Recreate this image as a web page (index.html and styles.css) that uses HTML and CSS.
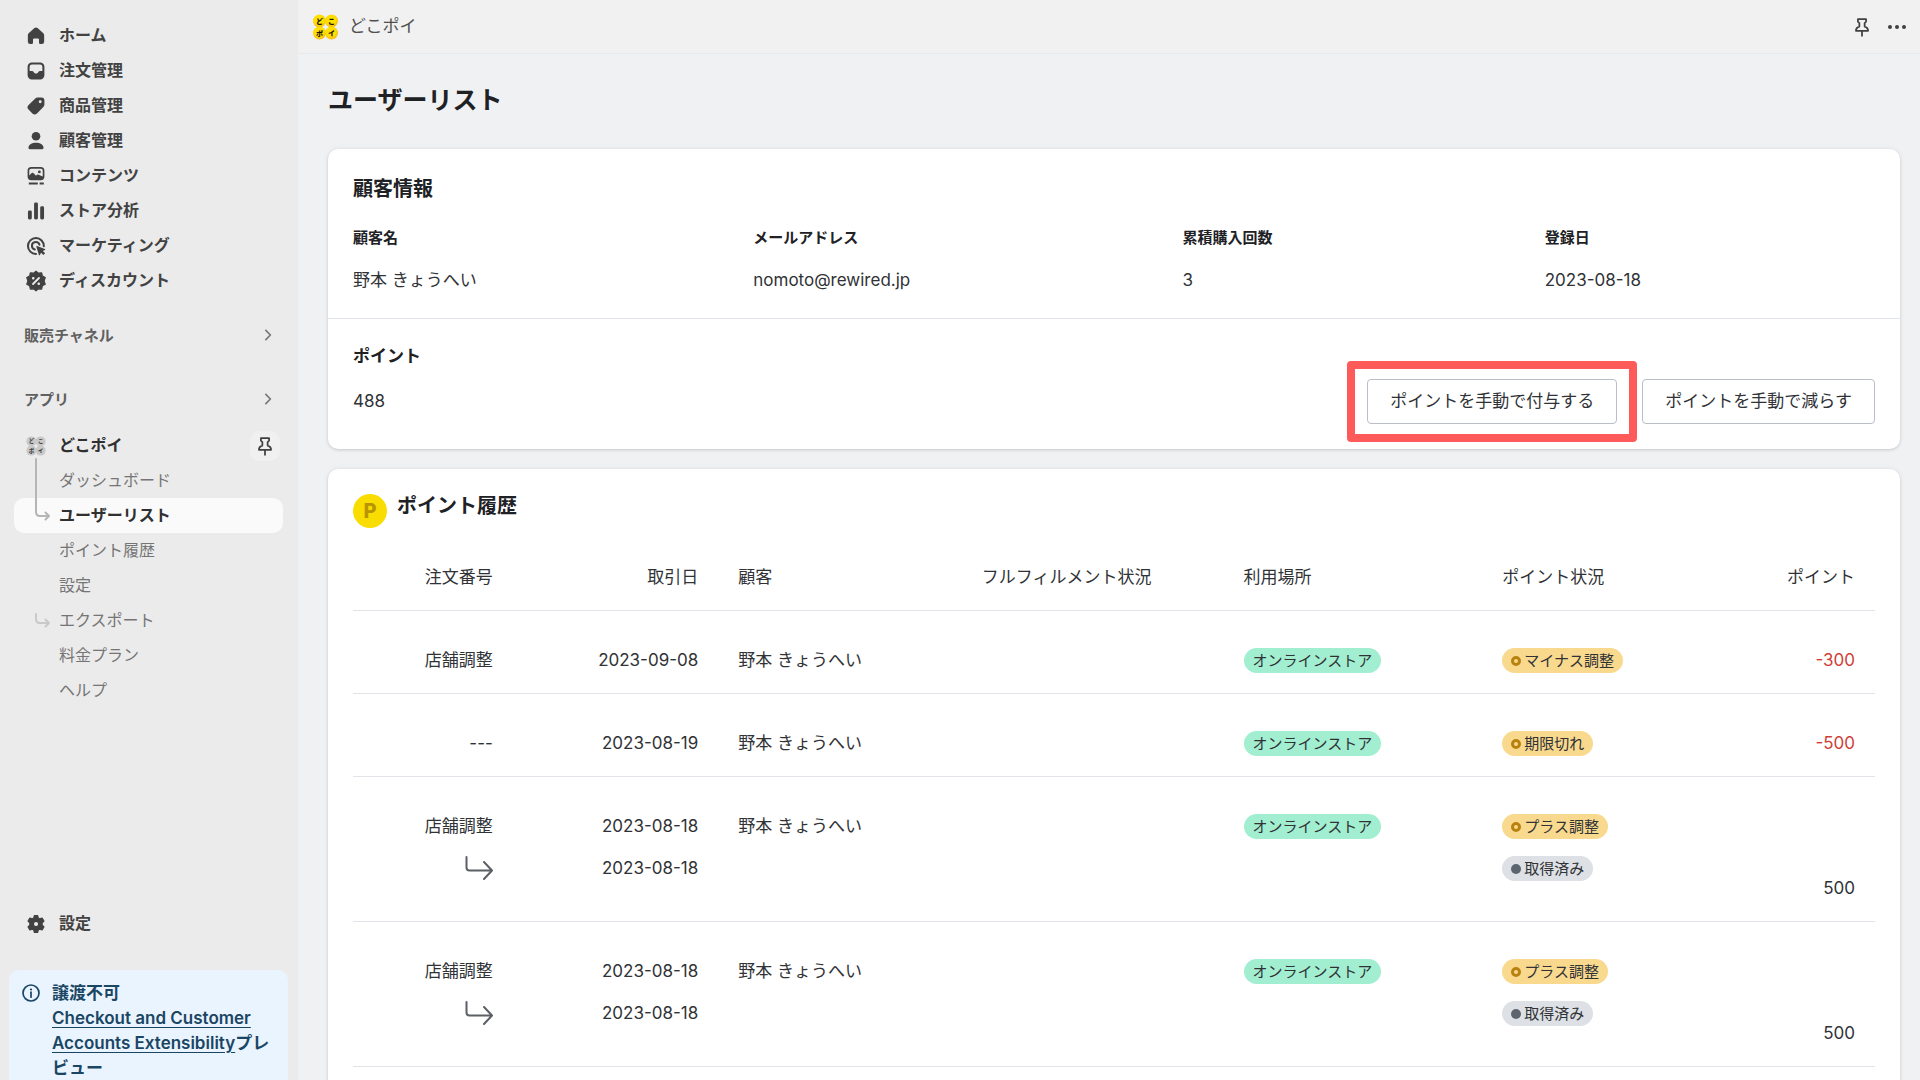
FILE: index.html
```html
<!DOCTYPE html>
<html lang="ja">
<head>
<meta charset="utf-8">
<meta name="viewport" content="width=device-width, initial-scale=1">
<title>どこポイ - ユーザーリスト</title>
<link rel="stylesheet" href="styles.css">
</head>
<body>
<svg class="defs" width="0" height="0" aria-hidden="true">
  <defs>
    <radialGradient id="coin-shade" cx=".45" cy=".4" r=".6">
      <stop offset=".6" stop-color="#ffe000"/><stop offset="1" stop-color="#f8b912"/>
    </radialGradient>
    <symbol id="i-pin" viewBox="0 0 20 20">
      <path d="M6.3 2.8h7.4v2.4l-1.3 1.2v3.2c2 .5 3.1 1.700 3.100 3.900h-11c0-2.200 1.100-3.400 3.100-3.900v-3.200l-1.300-1.200zM10 13.500v4.500" fill="none" stroke="currentColor" stroke-width="1.600" stroke-linejoin="round" stroke-linecap="round"/>
    </symbol>
    <symbol id="i-chevron" viewBox="0 0 20 20">
      <path d="M8.200 6.200l3.800 3.800-3.800 3.800" fill="none" stroke="currentColor" stroke-width="1.400" stroke-linecap="round" stroke-linejoin="round"/>
    </symbol>
    <symbol id="i-return" viewBox="0 0 28 24">
      <path d="M1.500 1v10.500q0 3 3 3h22M19 6l8 8.500-8 8.500" fill="none" stroke="currentColor" stroke-width="2" stroke-linecap="round" stroke-linejoin="round"/>
    </symbol>
    <symbol id="i-logo" viewBox="0 0 26 26">
      <g fill="var(--coin)">
        <circle cx="7" cy="7" r="6.500"/><circle cx="19" cy="7" r="6.500"/>
        <circle cx="7" cy="19" r="6.500"/><circle cx="19" cy="19" r="6.500"/>
      </g>
      <g class="logo-text" fill="var(--ink)">
        <text x="7" y="9.500">ど</text><text x="19" y="9.500">こ</text>
        <text x="7" y="21.500">ポ</text><text x="19" y="21.500">イ</text>
      </g>
    </symbol>
  </defs>
</svg>
<div class="app">
  <aside class="sidebar">
    <nav class="nav" aria-label="メイン">
      <a class="nav-item" href="#"><svg class="icon" viewBox="0 0 20 20"><path d="M8.700 3.400a2 2 0 0 1 2.600 0l4.600 4q.9.800.9 2v5.300a2 2 0 0 1-2 2h-1.300a1 1 0 0 1-1-1v-2.700a1 1 0 0 0-1-1h-3a1 1 0 0 0-1 1v2.700a1 1 0 0 1-1 1H5.200a2 2 0 0 1-2-2V9.400q0-1.200.9-2z"/></svg>ホーム</a>
      <a class="nav-item" href="#"><svg class="icon" viewBox="0 0 20 20"><path fill-rule="evenodd" d="M6.500 3h7A3.500 3.500 0 0 1 17 6.500v7a3.500 3.500 0 0 1-3.500 3.500h-7A3.500 3.500 0 0 1 3 13.500v-7A3.500 3.500 0 0 1 6.500 3zm.2 1.500a2 2 0 0 0-2 2V10h2.100q.7 0 1.100.6l.6.900q.4.500 1 .5h1q.6 0 1-.5l.6-.9q.4-.6 1.100-.6h2.100V6.500a2 2 0 0 0-2-2z"/></svg>注文管理</a>
      <a class="nav-item" href="#"><svg class="icon" viewBox="0 0 20 20"><path fill-rule="evenodd" d="M11.300 3h3.200A2.500 2.500 0 0 1 17 5.500v3.200q0 1.200-.9 2.100l-5.300 5.400a2.700 2.700 0 0 1-3.800 0l-3.200-3.200a2.700 2.700 0 0 1 0-3.800l5.400-5.300q.9-.9 2.100-.9zM13.500 7.700a1.200 1.200 0 1 0 0-2.400 1.200 1.200 0 0 0 0 2.400z"/></svg>商品管理</a>
      <a class="nav-item" href="#"><svg class="icon" viewBox="0 0 20 20"><circle cx="10" cy="6" r="3.600"/><path d="M10 11.500c3.500 0 6 1.500 6.300 4q.1 1.300-1 1.300H4.700q-1.100 0-1-1.300c.3-2.500 2.800-4 6.300-4z"/></svg>顧客管理</a>
      <a class="nav-item" href="#"><svg class="icon" viewBox="0 0 20 20"><path fill-rule="evenodd" d="M6 2.500h8a3 3 0 0 1 3 3v5a3 3 0 0 1-3 3H6a3 3 0 0 1-3-3v-5a3 3 0 0 1 3-3zm0 1.400a1.600 1.600 0 0 0-1.600 1.600v4l2-2q.7-.6 1.400 0l2.200 2.200.8-.7q.7-.6 1.400 0l3.400 1.500v-5A1.600 1.600 0 0 0 14 3.900zM12.800 7.800a1.200 1.200 0 1 1 0-2.400 1.200 1.200 0 0 1 0 2.400z"/><path d="M4 15.500h7.500v1.600H4zM13 15.500h3.500v1.600H13z"/></svg>コンテンツ</a>
      <a class="nav-item" href="#"><svg class="icon" viewBox="0 0 20 20"><rect x="3.300" y="9.500" width="3.200" height="7.500" rx="1.200"/><rect x="8.400" y="3" width="3.200" height="14" rx="1.200"/><rect x="13.500" y="6" width="3.200" height="11" rx="1.200"/></svg>ストア分析</a>
      <a class="nav-item" href="#"><svg class="icon" viewBox="0 0 20 20"><g fill="none" stroke="currentColor" stroke-width="1.700" stroke-linecap="round"><path d="M16.500 10.200A6.600 6.600 0 1 0 10 16.600"/><path d="M12.900 9A3.200 3.200 0 1 0 9 12.900"/></g><path d="M10.300 10.700q-.2-.8.6-.6l6.500 2.300q.8.400 0 .9l-1.700.9 1.900 1.900-1.500 1.500-1.900-1.900-.9 1.700q-.5.800-.9 0z"/></svg>マーケティング</a>
      <a class="nav-item" href="#"><svg class="icon" viewBox="0 0 20 20"><path fill-rule="evenodd" d="M10 1.800l2 1.700 2.700-.3.600 2.600 2.400 1.400-1 2.800 1 2.700-2.400 1.300-.6 2.700-2.700-.2-2 1.700-2-1.700-2.700.2-.6-2.700-2.400-1.300 1-2.700-1-2.800 2.400-1.400.6-2.600 2.700.3z" stroke="currentColor" stroke-linejoin="round"/><g class="icon-cut"><path d="M7.500 12.500l5-5" stroke-width="1.500" stroke-linecap="round"/><circle cx="7.700" cy="7.700" r=".6"/><circle cx="12.300" cy="12.300" r=".6"/></g></svg>ディスカウント</a>
    </nav>
    <a class="nav-heading channels" href="#">販売チャネル<svg class="chevron"><use href="#i-chevron"/></svg></a>
    <a class="nav-heading apps" href="#">アプリ<svg class="chevron"><use href="#i-chevron"/></svg></a>
    <nav class="nav" aria-label="アプリ">
      <div class="nav-app">
        <a class="nav-item app-link" href="#"><svg class="icon logo-gray"><use href="#i-logo"/></svg>どこポイ</a>
        <button class="pin-button" type="button" aria-label="固定を解除"><svg class="pin"><use href="#i-pin"/></svg></button>
      </div>
      <div class="subnav">
        <a class="sub-item" href="#">ダッシュボード</a>
        <a class="sub-item active" href="#" aria-current="page">ユーザーリスト</a>
        <a class="sub-item" href="#">ポイント履歴</a>
        <a class="sub-item" href="#">設定</a>
        <a class="sub-item child" href="#"><svg class="branch" viewBox="0 0 16 16"><path d="M1 1v5q0 4 4 4h9M10.500 6.500l3.500 3.500-3.500 3.500"/></svg>エクスポート</a>
        <a class="sub-item" href="#">料金プラン</a>
        <a class="sub-item" href="#">ヘルプ</a>
        <svg class="tree" viewBox="0 0 16 64"><path d="M1 1v53q0 4 4 4h9M10.500 54.500l3.500 3.500-3.500 3.500"/></svg>
      </div>
    </nav>
    <a class="nav-item settings" href="#"><svg class="icon" viewBox="0 0 20 20"><path fill-rule="evenodd" d="M8.600 3h2.800l.5 2.100 1.100.6 2.100-.6 1.500 2.500-1.500 1.600v1.600l1.500 1.600-1.500 2.500-2.100-.6-1.100.6-.5 2.100H8.600l-.5-2.100-1.100-.6-2.100.6-1.500-2.500 1.500-1.600V9.200L3.400 7.600l1.500-2.500 2.100.6 1.100-.6zM10 12.200a2.200 2.200 0 1 0 0-4.400 2.200 2.200 0 0 0 0 4.400z" stroke="currentColor" stroke-linejoin="round"/></svg>設定</a>
    <div class="notice">
      <svg class="notice-icon" viewBox="0 0 18 18"><circle cx="9" cy="9" r="8" fill="none" stroke="currentColor" stroke-width="1.700"/><circle cx="9" cy="5.500" r="1.100"/><path d="M9 8.200v5" stroke="currentColor" stroke-width="1.700" stroke-linecap="round"/></svg>
      <div><strong>譲渡不可</strong><br><a href="#">Checkout and Customer Accounts Extensibility</a>プレビュー</div>
    </div>
  </aside>

  <div class="content">
    <header class="topbar">
      <svg class="logo"><use href="#i-logo"/></svg>
      <span class="app-name">どこポイ</span>
      <button class="top-button" type="button" aria-label="固定"><svg class="pin"><use href="#i-pin"/></svg></button>
      <button class="top-button" type="button" aria-label="その他"><svg class="more" viewBox="0 0 20 20"><circle cx="3" cy="10" r="2"/><circle cx="10" cy="10" r="2"/><circle cx="17" cy="10" r="2"/></svg></button>
    </header>
    <main class="page">
      <h1>ユーザーリスト</h1>
      <section class="card">
        <div class="card-section">
          <h2>顧客情報</h2>
          <table class="info">
            <colgroup><col class="i1"><col class="i2"><col class="i3"><col class="i4"></colgroup>
            <thead><tr><th scope="col">顧客名</th><th scope="col">メールアドレス</th><th scope="col">累積購入回数</th><th scope="col">登録日</th></tr></thead>
            <tbody><tr><td>野本 きょうへい</td><td>nomoto@rewired.jp</td><td>3</td><td>2023-08-18</td></tr></tbody>
          </table>
        </div>
        <div class="card-section points">
          <h3>ポイント</h3>
          <div class="points-row">
            <span class="balance">488</span>
            <span class="highlight"><button class="button" type="button">ポイントを手動で付与する</button></span>
            <button class="button" type="button">ポイントを手動で減らす</button>
          </div>
        </div>
      </section>

      <section class="card">
        <div class="card-section history">
          <div class="history-title"><span class="coin">P</span><h2>ポイント履歴</h2></div>
          <table class="log">
            <colgroup><col class="c1"><col class="c2"><col class="c3"><col class="c4"><col class="c5"><col class="c6"><col class="c7"></colgroup>
            <thead>
              <tr><th scope="col" class="end">注文番号</th><th scope="col" class="end">取引日</th><th scope="col">顧客</th><th scope="col">フルフィルメント状況</th><th scope="col">利用場所</th><th scope="col">ポイント状況</th><th scope="col" class="end">ポイント</th></tr>
            </thead>
            <tbody>
              <tr>
                <td class="end">店舗調整</td><td class="end">2023-09-08</td><td>野本 きょうへい</td><td></td>
                <td><span class="badge green">オンラインストア</span></td>
                <td><span class="badge yellow"><i class="dot ring"></i>マイナス調整</span></td>
                <td class="end amount minus">-300</td>
              </tr>
              <tr>
                <td class="end">---</td><td class="end">2023-08-19</td><td>野本 きょうへい</td><td></td>
                <td><span class="badge green">オンラインストア</span></td>
                <td><span class="badge yellow"><i class="dot ring"></i>期限切れ</span></td>
                <td class="end amount minus">-500</td>
              </tr>
              <tr>
                <td class="end">店舗調整<div class="second"><svg class="return"><use href="#i-return"/></svg></div></td>
                <td class="end">2023-08-18<div class="second">2023-08-18</div></td><td>野本 きょうへい</td><td></td>
                <td><span class="badge green">オンラインストア</span></td>
                <td><span class="badge yellow"><i class="dot ring"></i>プラス調整</span><div class="second"><span class="badge gray"><i class="dot"></i>取得済み</span></div></td>
                <td class="end amount">500</td>
              </tr>
              <tr>
                <td class="end">店舗調整<div class="second"><svg class="return"><use href="#i-return"/></svg></div></td>
                <td class="end">2023-08-18<div class="second">2023-08-18</div></td><td>野本 きょうへい</td><td></td>
                <td><span class="badge green">オンラインストア</span></td>
                <td><span class="badge yellow"><i class="dot ring"></i>プラス調整</span><div class="second"><span class="badge gray"><i class="dot"></i>取得済み</span></div></td>
                <td class="end amount">500</td>
              </tr>
            </tbody>
          </table>
        </div>
      </section>
    </main>
  </div>
</div>
</body>
</html>
```
FILE: styles.css
```css
* { box-sizing: border-box; }

body {
  margin: 0;
  background: #f0f1f3;
  color: #303236;
  font-family: Inter, "Noto Sans CJK JP", sans-serif;
  font-size: 17px;
  line-height: 25px;
}

a { color: inherit; text-decoration: none; }
button { font: inherit; color: inherit; cursor: pointer; }
svg { flex: none; fill: currentColor; }
h1, h2, h3 { margin: 0; color: #202124; font-weight: 700; }
table { width: 100%; border-collapse: collapse; table-layout: fixed; }
th, td { padding: 0; text-align: left; vertical-align: top; }

.defs { position: absolute; }
.logo-text {
  font-size: 7px;
  font-weight: 900;
  text-anchor: middle;
}

.app { display: flex; height: 100vh; overflow: hidden; }

/* Sidebar */
.sidebar {
  display: flex;
  flex: none;
  flex-direction: column;
  width: 298px;
  padding-top: 18px;
  background: #ebebeb;
  font-size: 16px;
}
.nav { padding: 0 15px 0 14px; }
.nav-item {
  display: flex;
  align-items: center;
  gap: 11px;
  height: 35px;
  padding-left: 10px;
  color: #424242;
  font-weight: 700;
}
.icon { width: 24px; height: 24px; }
.icon-cut { fill: #ebebeb; stroke: #ebebeb; }
.nav-heading {
  display: flex;
  align-items: center;
  justify-content: space-between;
  height: 30px;
  padding: 0 18px 0 24px;
  color: #606060;
  font-size: 15px;
  font-weight: 700;
}
.channels { margin-top: 22px; }
.apps { margin: 34px 0 14px; }
.chevron { width: 24px; height: 24px; color: #777; }
.nav-app { display: flex; align-items: center; }
.app-link { flex: 1; color: #303030; }
.logo-gray {
  --coin: #c9c9c9;
  --ink: #444;
  height: 20px;
}
.pin-button {
  display: flex;
  align-items: center;
  justify-content: center;
  width: 30px;
  height: 30px;
  margin-right: 3px;
  padding: 0;
  border: 0;
  border-radius: 10px;
  background: #f0f0f0;
}
.pin { width: 22px; height: 22px; color: #404040; }
.subnav { position: relative; }
.sub-item {
  display: flex;
  align-items: center;
  height: 35px;
  padding-left: 45px;
  color: #757575;
}
.sub-item.active {
  border-radius: 10px;
  background: #fafafa;
  color: #303030;
  font-weight: 700;
}
.sub-item.child { padding-left: 21px; gap: 8px; }
.branch, .tree {
  width: 16px;
  fill: none;
  stroke: #c9c9c9;
  stroke-width: 2;
  stroke-linecap: round;
  stroke-linejoin: round;
}
.branch { height: 16px; }
.tree {
  position: absolute;
  top: -5px;
  left: 21px;
  height: 64px;
  stroke: #b5b5b5;
}
.settings { margin: auto 14px 29px; }
.notice {
  display: flex;
  flex: none;
  gap: 12px;
  height: 110px;
  margin: 0 10px 0 9px;
  padding: 11px 10px 0 13px;
  border-radius: 10px 10px 0 0;
  background: #eaf4ff;
  color: #1a4664;
  font-size: 17px;
  font-weight: 600;
}
.notice strong { font-weight: 700; }
.notice a { text-decoration: underline; text-underline-offset: 3px; }
.notice-icon { width: 18px; height: 18px; margin-top: 3px; }

/* Top bar */
.content {
  display: flex;
  flex: 1;
  flex-direction: column;
  min-width: 0;
}
.topbar {
  display: flex;
  flex: none;
  align-items: center;
  height: 54px;
  padding: 0 13px 0 14px;
  border-bottom: 1px solid #e8e9eb;
  background: #f1f1f1;
}
.logo {
  --coin: url(#coin-shade);
  --ink: #1c1600;
  width: 27px;
  height: 26px;
}
.app-name { flex: 1; margin-left: 10px; color: #505050; }
.top-button {
  display: flex;
  padding: 0;
  border: 0;
  background: none;
}
.top-button + .top-button { margin-left: 14px; }
.more { width: 20px; height: 20px; color: #404040; }

/* Page */
.page {
  flex: 1;
  min-height: 0;
  padding: 30px 20px 30px 30px;
  overflow-y: auto;
  scrollbar-width: none;
}
h1 { margin-bottom: 33px; font-size: 25px; line-height: 32px; }
h2 { font-size: 20px; line-height: 30px; }
h3 { font-size: 17px; line-height: 25px; }
.card {
  margin-bottom: 20px;
  border-radius: 10px;
  background: #fff;
  box-shadow: 0 1px 3px rgba(0, 0, 0, .14), 0 0 6px rgba(0, 0, 0, .05);
}
.card-section { padding: 25px; }

.info { margin-top: 24px; }
.info th {
  padding-bottom: 20px;
  color: #202124;
  font-size: 15px;
  font-weight: 700;
  line-height: 20px;
}
.i1 { width: 26.3%; }
.i2 { width: 28.2%; }
.i3 { width: 23.8%; }
.i4 { width: 21.7%; }

.points { border-top: 1px solid #e1e4ea; }
.points-row {
  display: flex;
  align-items: center;
  gap: 25px;
  margin-top: 10px;
}
.balance { flex: 1; }
.button {
  height: 45px;
  padding: 0 22px;
  border: 1px solid #b9bec7;
  border-radius: 4px;
  background: #fff;
}
.highlight { position: relative; }
.highlight::after {
  content: "";
  position: absolute;
  inset: -18px -20px;
  border: 8px solid #ff5a5a;
  border-radius: 4px;
  pointer-events: none;
}

/* Point history */
.history-title { display: flex; align-items: flex-start; gap: 10px; }
.history-title h2 { line-height: 24px; }
.coin {
  width: 34px;
  height: 34px;
  border-radius: 50%;
  background: #fadd00;
  color: #b89400;
  font-size: 20px;
  font-weight: 800;
  line-height: 34px;
  text-align: center;
}
.log th, .log td {
  padding: 37px 20px 20px;
  border-bottom: 1px solid #e1e4e8;
  font-weight: 400;
}
.log .end { text-align: right; }
.log .amount { vertical-align: bottom; }
.log .minus { color: #cf3f38; }
.c1 { width: 10.5%; }
.c2 { width: 13.5%; }
.c3 { width: 16%; }
.c4 { width: 17.2%; }
.c5 { width: 17%; }
.c6 { width: 14.8%; }
.c7 { width: 11%; }
.second { height: 62px; padding-top: 17px; }
.return { width: 28px; height: 24px; color: #5c5f64; }
.badge {
  display: inline-flex;
  align-items: center;
  gap: 3px;
  height: 25px;
  padding: 0 9px;
  border-radius: 13px;
  font-size: 15px;
  vertical-align: top;
}
.green { background: #a2eed1; }
.yellow { background: #f9d98e; }
.gray { background: #dde0e4; }
.dot {
  width: 10px;
  height: 10px;
  border-radius: 50%;
  background: #5c6470;
}
.ring { border: 3px solid #b98110; background: none; }
```
